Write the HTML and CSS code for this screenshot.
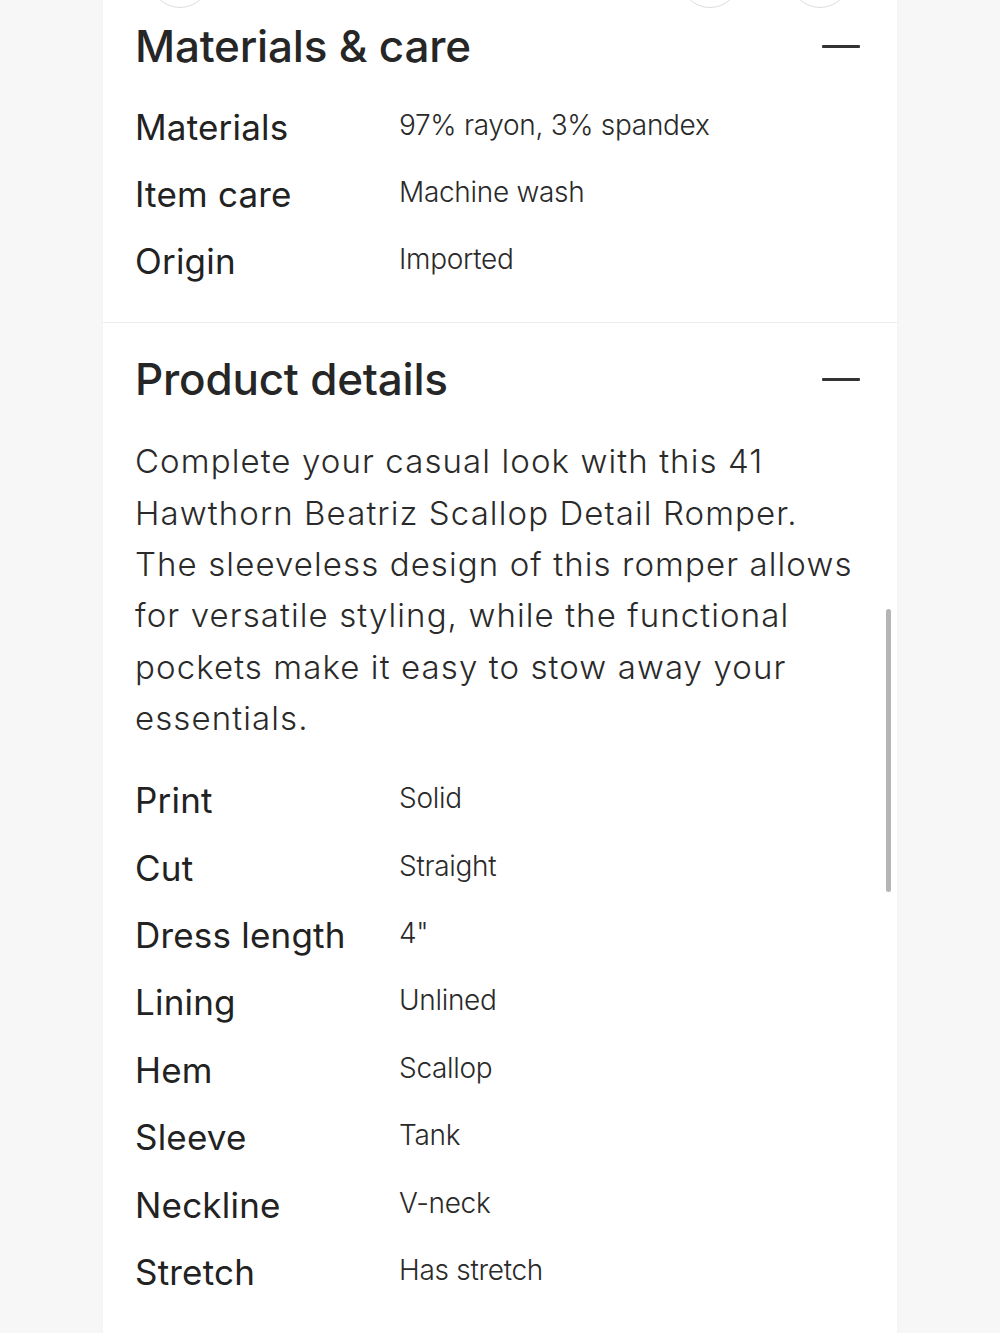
FILE: index.html
```html
<!DOCTYPE html>
<html lang="en">
<head>
<meta charset="utf-8">
<title>Product details</title>
<link rel="stylesheet" href="styles.css">
</head>
<body>
<div class="page">
  <main class="card">
    <div class="swatches">
      <span class="swatch s1"></span>
      <span class="swatch s2"></span>
      <span class="swatch s3"></span>
    </div>
    <section class="section first">
      <div class="section-head">
        <h2 class="title">Materials &amp; care</h2>
        <span class="minus"></span>
      </div>
      <dl class="specs">
        <div class="row"><dt>Materials</dt><dd>97% rayon, 3% spandex</dd></div>
        <div class="row"><dt>Item care</dt><dd>Machine wash</dd></div>
        <div class="row"><dt>Origin</dt><dd>Imported</dd></div>
      </dl>
    </section>
    <section class="section second">
      <div class="section-head">
        <h2 class="title">Product details</h2>
        <span class="minus"></span>
      </div>
      <p class="desc">Complete your casual look with this 41 Hawthorn Beatriz Scallop Detail Romper. The sleeveless design of this romper allows for versatile styling, while the functional pockets make it easy to stow away your essentials.</p>
      <dl class="specs">
        <div class="row"><dt>Print</dt><dd>Solid</dd></div>
        <div class="row"><dt>Cut</dt><dd>Straight</dd></div>
        <div class="row"><dt>Dress length</dt><dd>4"</dd></div>
        <div class="row"><dt>Lining</dt><dd>Unlined</dd></div>
        <div class="row"><dt>Hem</dt><dd>Scallop</dd></div>
        <div class="row"><dt>Sleeve</dt><dd>Tank</dd></div>
        <div class="row"><dt>Neckline</dt><dd>V-neck</dd></div>
        <div class="row"><dt>Stretch</dt><dd>Has stretch</dd></div>
      </dl>
    </section>
    <div class="scrollbar"></div>
  </main>
</div>
</body>
</html>
```

FILE: styles.css
```css
* { box-sizing: border-box; }
html, body {
  margin: 0;
  padding: 0;
  background: #f7f7f7;
}
body {
  font-family: Inter, "Noto Sans", sans-serif;
  color: #262626;
  height: 1333px;
  overflow: hidden;
}
.page {
  display: flex;
  justify-content: flex-start;
  padding-left: 103px;
}
.card {
  position: relative;
  width: 794px;
  min-height: 1333px;
  background: #ffffff;
  box-shadow: 0 0 6px rgba(0,0,0,0.03);
}
.swatches {
  height: 8px;
  overflow: hidden;
  display: flex;
  align-items: flex-end;
}
.swatch {
  flex: none;
  width: 60px;
  height: 60px;
  border-radius: 50%;
  border: 1px solid #dcdcdc;
  background: #fff;
}
.s1 { margin-left: 47px; }
.s2 { margin-left: 470px; }
.s3 { margin-left: 50px; }

.section {
  padding: 0 37px 0 32px;
}
.section.first {
  padding-top: 10px;
  padding-bottom: 27px;
  border-bottom: 1px solid #ededed;
}
.section.second {
  padding-top: 28px;
}
.section-head {
  display: flex;
  align-items: center;
  justify-content: space-between;
  height: 56px;
}
.title {
  margin: 0;
  font-size: 44px;
  font-weight: 500;
  letter-spacing: -0.2px;
  line-height: 56px;
  color: #262626;
}
.minus {
  width: 38px;
  height: 3px;
  background: #333;
  border-radius: 1px;
}
.specs {
  margin: 0;
}
.section.first .specs { margin-top: 19px; }
.section.second .specs { margin-top: 22px; }
.row {
  display: flex;
  align-items: center;
  height: 67.4px;
}
.row dt {
  width: 264px;
  flex: none;
  font-size: 35px;
  font-weight: 400;
  letter-spacing: 0.2px;
  color: #222;
}
.row dd {
  margin: 0;
  font-size: 28px;
  font-weight: 300;
  letter-spacing: -0.3px;
  color: #2a2a2a;
  position: relative;
  top: -2px;
}
.desc {
  margin: 29px 0 0;
  font-size: 33px;
  font-weight: 300;
  line-height: 51.4px;
  letter-spacing: 1.1px;
  color: #2a2a2a;
}
.scrollbar {
  position: absolute;
  left: 783px;
  top: 609px;
  width: 5px;
  height: 283px;
  border-radius: 3px;
  background: #b5b5b5;
}
```
